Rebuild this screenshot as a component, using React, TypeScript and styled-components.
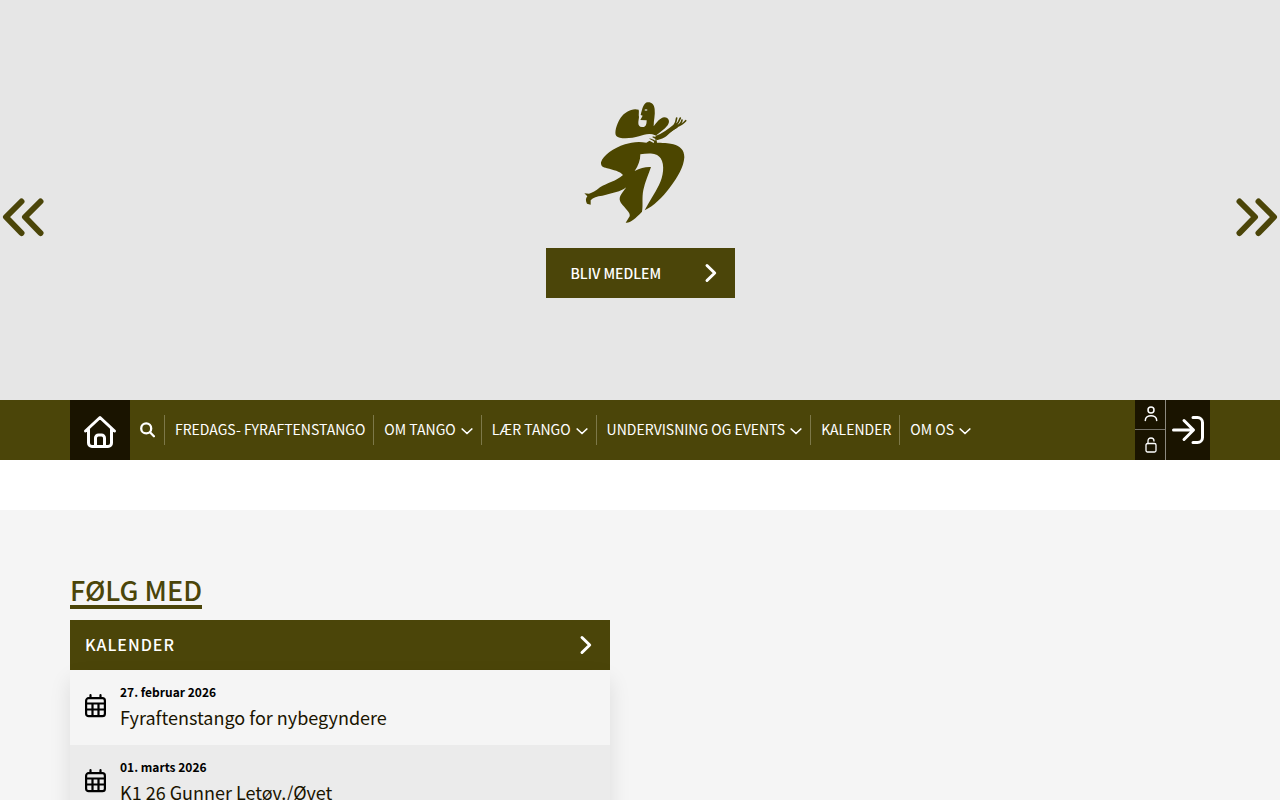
import React from "react";
import styled, { createGlobalStyle } from "styled-components";

const olive = "#4b4509";
const dark = "#1a1400";

const Global = createGlobalStyle`
  *, *::before, *::after { box-sizing: border-box; }
  body {
    margin: 0;
    background: #f5f5f5;
    color: ${dark};
    font-family: "Source Sans Pro", "Noto Sans CJK JP", "Noto Sans", sans-serif;
    font-size: 14px;
    line-height: 20px;
  }
  a { color: inherit; text-decoration: none; }
  button { font: inherit; color: inherit; border: 0; padding: 0; background: none; cursor: pointer; }
  svg { display: block; flex: none; }
`;

const Hero = styled.header`
  position: relative;
  height: 400px;
  padding-top: 95px;
  background: #e6e6e6;
  display: flex;
  flex-direction: column;
  align-items: center;
  gap: 18px;
`;

const SlideButton = styled.button<{ $side: "left" | "right" }>`
  position: absolute;
  top: 197px;
  ${(p) => p.$side}: 2px;
  color: ${olive};
`;

const CallToAction = styled.a`
  display: flex;
  align-items: center;
  justify-content: space-between;
  width: 189px;
  height: 50px;
  padding: 0 17px 0 25px;
  background: ${olive};
  && { color: #fff; }
  font-weight: 500;
`;

const NavBar = styled.nav`
  background: ${olive};
  color: #fff;
`;

const Container = styled.div`
  max-width: 1140px;
  margin: 0 auto;
`;

const NavInner = styled(Container)`
  display: flex;
  align-items: center;
  height: 60px;
`;

const HomeLink = styled.a`
  display: flex;
  align-items: center;
  justify-content: center;
  width: 60px;
  height: 60px;
  padding-top: 4px;
  background: ${dark};
`;

const SearchButton = styled.button`
  display: flex;
  align-items: center;
  height: 30px;
  padding: 0 9px 0 10px;
`;

const Menu = styled.ul`
  display: flex;
  flex: 1;
  margin: 0;
  padding: 0;
  list-style: none;
`;

const MenuItem = styled.li`
  border-left: 1px solid #7d7849;
`;

const MenuLink = styled.a`
  display: flex;
  align-items: center;
  gap: 5px;
  height: 30px;
  padding: 0 8px 2px 10px;
  white-space: nowrap;
  svg { margin-top: 4px; }
`;

const Account = styled.div`
  display: flex;
  height: 60px;
  background: ${dark};
`;

const AccountColumn = styled.div`
  display: flex;
  flex-direction: column;
  width: 31px;
  border-right: 1px solid #8d8a80;
`;

const AccountLink = styled.a`
  display: flex;
  align-items: center;
  justify-content: center;
  height: 30px;
  padding-left: 2px;
  &:first-child { padding-bottom: 2px; border-bottom: 1px solid #76736a; }
`;

const LoginLink = styled.a`
  display: flex;
  align-items: center;
  justify-content: center;
  width: 44px;
`;

const Spacer = styled.div`
  height: 50px;
  background: #fff;
`;

const Main = styled.main`
  padding: 60px 0 50px;
`;

const Column = styled.section`
  width: 540px;
  max-width: 100%;
`;

const Heading = styled.h2`
  width: fit-content;
  margin: 0 0 11px;
  padding-top: 5px;
  border-bottom: 4px solid ${olive};
  color: ${olive};
  font-size: 27px;
  line-height: 30px;
  font-weight: 500;
`;

const CardHeader = styled.a`
  display: flex;
  align-items: center;
  justify-content: space-between;
  height: 50px;
  padding: 0 17px 0 15px;
  background: ${olive};
  && { color: #fff; }
  font-size: 16px;
  font-weight: 500;
  letter-spacing: 1px;
  span { padding-bottom: 2px; }
`;

const EventList = styled.ul`
  margin: 0;
  padding: 0;
  list-style: none;
  box-shadow: 0 10px 20px rgba(0, 0, 0, 0.1);
`;

const EventItem = styled.li`
  background: #f5f5f5;
  &:nth-child(even) { background: #ebebeb; }
`;

const EventLink = styled.a`
  display: flex;
  align-items: center;
  gap: 14px;
  height: 75px;
  padding: 0 15px 1px;
  svg { margin-bottom: 2px; }
`;

const EventDate = styled.time`
  display: block;
  color: #000;
  font-size: 12px;
  line-height: 20px;
  font-weight: 600;
`;

const EventTitle = styled.span`
  display: block;
  font-size: 18px;
  line-height: 30px;
`;

const Chevron = () => (
  <svg width="14" height="20" viewBox="0 0 14 20" fill="none" stroke="currentColor" strokeWidth="3" strokeLinecap="round" strokeLinejoin="round" aria-hidden="true">
    <path d="M3 2.500l7.700 7.500L3 17.500" />
  </svg>
);

const Caret = () => (
  <svg width="12" height="8" viewBox="0 0 12 8" fill="none" stroke="currentColor" strokeWidth="1.700" strokeLinecap="round" strokeLinejoin="round" aria-hidden="true">
    <path d="M1.200 2L6 6.500L10.800 2" />
  </svg>
);

const DoubleChevron = ({ flip }: { flip?: boolean }) => (
  <svg width="43" height="40" viewBox="0 0 43 40" fill="none" stroke="currentColor" strokeWidth="6" strokeLinecap="round" strokeLinejoin="round" aria-hidden="true">
    <path d={flip ? "M4.500 4.500l15.500 15.500L4.500 36M23.500 4.500l15.500 15.500L23.500 36" : "M19.500 4.500L4 20l15.500 16M38.500 4.500L23 20l15.500 16"} />
  </svg>
);

const Logo = () => (
  <svg width="130" height="135" viewBox="0 0 390 405" fill="#4c4600" role="img" aria-label="Tango">
    <path d="M191 44C172 38 150 50 137 68C124 88 117 114 124 123C132 133 170 131 192 124C207 119 222 113 238 120L244 128L246 143C273 144 285 144 295 148C315 153 328 165 328 187C326 215 310 245 284 278C263 307 235 333 209 346C222 320 240 295 252 270C265 245 270 210 257 190C244 172 220 175 196 178C196 196 190 212 179 228C196 219 212 215 228 216C222 235 210 260 205 285C200 310 205 330 201 350C180 372 165 385 152 383L164 364C168 354 150 340 138 324C128 309 138 298 154 277Q146 284 132 289L82 302C66 304 54 307 47 316L47 329L36 326C32 319 31 310 37 304L28 295L42 296C52 294 62 288 75 277C95 264 125 258 144 240C135 229 115 225 96 220C84 217 77 214 78 202C85 180 115 160 150 148C168 142 190 138 214 143L226 136L220 124L238 136C265 133 275 123 285 113C292 105 305 101 310 95L304 83L297 90C290 98 280 106 268 113C258 121 248 124 240 124C250 116 268 104 278 91C286 80 282 68 268 67C256 68 245 82 236 94C236 76 241 60 239 43C238 28 229 21 218 22C206 23 202 40 197 60L203 62L196 75L215 76C215 91 211 98 201 96C185 95 191 78 192 66C190 58 193 51 191 44Z" />
    <path d="M238 129C264 126 285 104 302 93" fill="none" stroke="#4c4600" strokeWidth="13" strokeLinecap="round" />
    <path d="M296 94Q304 82 305 69M301 92Q312 82 316 69M305 93Q320 86 321 75M304 95Q323 88 332 77" fill="none" stroke="#4c4600" strokeWidth="5" strokeLinecap="round" />
    <path d="M200 130Q222 116 240 123M206 129Q226 124 239 133M205 133Q224 131 235 141" fill="none" stroke="#e6e6e6" strokeWidth="5" strokeLinecap="round" />
    <path d="M208 45q5-4 10 0q-5 4-10 0z" fill="#e6e6e6" />
  </svg>
);

const HomeIcon = () => (
  <svg width="34" height="34" viewBox="0 0 34 34" fill="none" stroke="currentColor" strokeWidth="3" strokeLinecap="round" strokeLinejoin="round" aria-hidden="true">
    <path d="M2.500 16L17 2.500L31.500 16M5.500 14.500V28a3.500 3.500 0 0 0 3.500 3.500h16a3.500 3.500 0 0 0 3.500-3.500V14.500M12.500 31v-8a3 3 0 0 1 3-3h3a3 3 0 0 1 3 3v8" />
  </svg>
);

const SearchIcon = () => (
  <svg width="15" height="16" viewBox="0 0 15 16" fill="none" stroke="currentColor" strokeWidth="2.300" strokeLinecap="round" aria-hidden="true">
    <circle cx="6.200" cy="6.400" r="5" />
    <path d="M10 10.300l3.900 3.900" />
  </svg>
);

const UserIcon = () => (
  <svg width="14" height="16" viewBox="0 0 14 16" fill="none" stroke="currentColor" strokeWidth="1.500" strokeLinecap="round" aria-hidden="true">
    <circle cx="7" cy="4" r="3" />
    <path d="M1.300 14.500c0-6.300 11.400-6.300 11.400 0" />
  </svg>
);

const LockIcon = () => (
  <svg width="12" height="16" viewBox="0 0 12 16" fill="none" stroke="currentColor" strokeWidth="1.300" strokeLinecap="round" strokeLinejoin="round" aria-hidden="true">
    <rect x="1" y="6.500" width="10" height="8.500" rx="1.500" />
    <path d="M3 6.500V4q0-3 3-3t3 3" />
  </svg>
);

const LoginIcon = () => (
  <svg width="34" height="30" viewBox="0 0 34 30" fill="none" stroke="currentColor" strokeWidth="3" strokeLinecap="round" strokeLinejoin="round" aria-hidden="true">
    <path d="M2.500 15H22M13 5.500l9.500 9.500L13 24.500M22 2.500h4.500a5 5 0 0 1 5 5v15a5 5 0 0 1-5 5H22" />
  </svg>
);

const CalendarIcon = () => (
  <svg width="21" height="24" viewBox="0 0 21 24" fill="none" stroke="#000" strokeWidth="2.200" strokeLinecap="round" strokeLinejoin="round" aria-hidden="true">
    <rect x="1.100" y="4.200" width="18.800" height="18" rx="2.500" />
    <path d="M1 9.500h19M1 15.500h19M7.500 9.500V22M13.500 9.500V22M5.500 1.200V4M15.500 1.200V4" />
  </svg>
);

const menu = [
  { label: "FREDAGS- FYRAFTENSTANGO" },
  { label: "OM TANGO", sub: true },
  { label: "LÆR TANGO", sub: true },
  { label: "UNDERVISNING OG EVENTS", sub: true },
  { label: "KALENDER" },
  { label: "OM OS", sub: true },
];

const events = [
  { iso: "2026-02-27", date: "27. februar 2026", title: "Fyraftenstango for nybegyndere" },
  { iso: "2026-03-01", date: "01. marts 2026", title: "K1 26 Gunner Letøv./Øvet" },
];

export default function App() {
  return (
    <>
      <Global />
      <Hero>
        <SlideButton $side="left" aria-label="Forrige"><DoubleChevron /></SlideButton>
        <Logo />
        <CallToAction href="#medlem">BLIV MEDLEM<Chevron /></CallToAction>
        <SlideButton $side="right" aria-label="Næste"><DoubleChevron flip /></SlideButton>
      </Hero>
      <NavBar>
        <NavInner>
          <HomeLink href="#" aria-label="Forside"><HomeIcon /></HomeLink>
          <SearchButton aria-label="Søg"><SearchIcon /></SearchButton>
          <Menu>
            {menu.map((item) => (
              <MenuItem key={item.label}>
                <MenuLink href="#menu">{item.label}{item.sub && <Caret />}</MenuLink>
              </MenuItem>
            ))}
          </Menu>
          <Account>
            <AccountColumn>
              <AccountLink href="#profil" aria-label="Profil"><UserIcon /></AccountLink>
              <AccountLink href="#kode" aria-label="Adgangskode"><LockIcon /></AccountLink>
            </AccountColumn>
            <LoginLink href="#login" aria-label="Log ind"><LoginIcon /></LoginLink>
          </Account>
        </NavInner>
      </NavBar>
      <Spacer />
      <Main>
        <Container>
          <Column>
            <Heading>FØLG MED</Heading>
            <CardHeader href="#kalender"><span>KALENDER</span><Chevron /></CardHeader>
            <EventList>
              {events.map((event) => (
                <EventItem key={event.iso}>
                  <EventLink href="#event">
                    <CalendarIcon />
                    <div>
                      <EventDate dateTime={event.iso}>{event.date}</EventDate>
                      <EventTitle>{event.title}</EventTitle>
                    </div>
                  </EventLink>
                </EventItem>
              ))}
            </EventList>
          </Column>
        </Container>
      </Main>
    </>
  );
}
